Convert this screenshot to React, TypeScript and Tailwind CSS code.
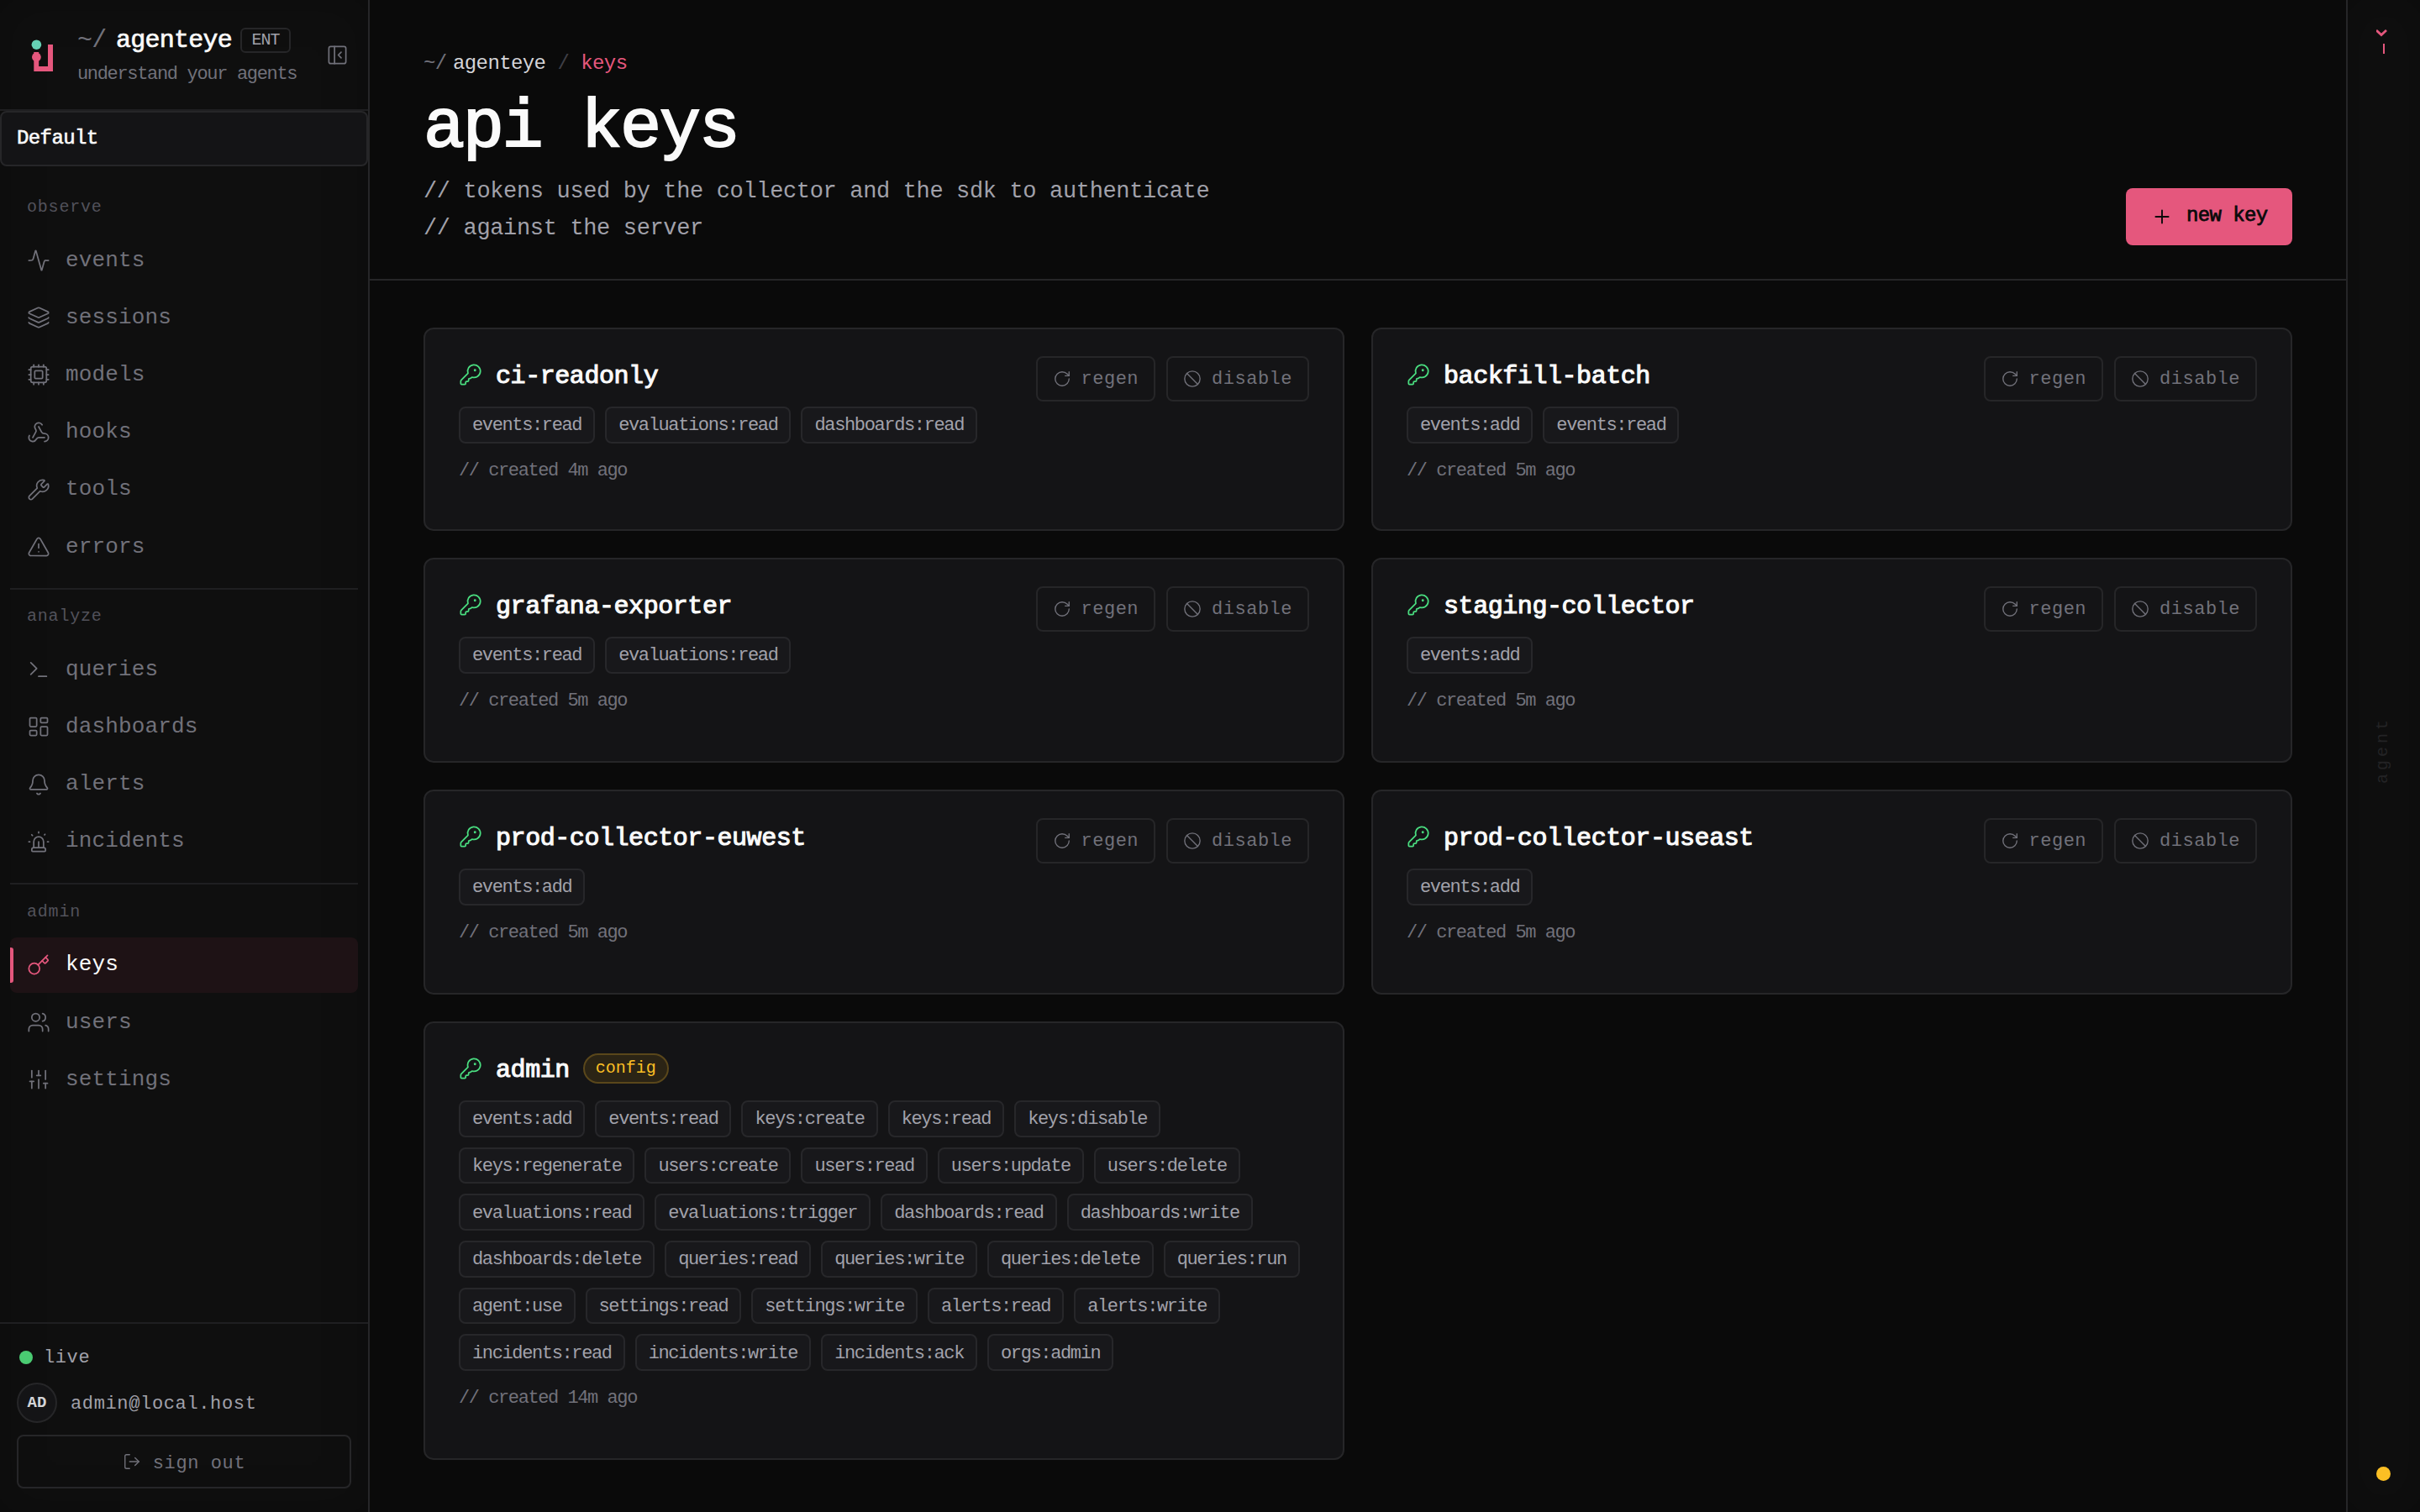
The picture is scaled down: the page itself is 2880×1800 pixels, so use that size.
import type { ReactNode } from "react";
import {
  Activity,
  Ban,
  Bell,
  Cpu,
  KeyRound,
  Key,
  Layers,
  LayoutDashboard,
  LogOut,
  PanelLeftClose,
  Plus,
  RotateCw,
  Siren,
  SlidersVertical,
  Terminal,
  TriangleAlert,
  Users,
  Webhook,
  Wrench,
  type LucideIcon,
} from "lucide-react";

type NavEntry = { label: string; icon: LucideIcon; active?: boolean };

const OBSERVE: NavEntry[] = [
  { label: "events", icon: Activity },
  { label: "sessions", icon: Layers },
  { label: "models", icon: Cpu },
  { label: "hooks", icon: Webhook },
  { label: "tools", icon: Wrench },
  { label: "errors", icon: TriangleAlert },
];

const ANALYZE: NavEntry[] = [
  { label: "queries", icon: Terminal },
  { label: "dashboards", icon: LayoutDashboard },
  { label: "alerts", icon: Bell },
  { label: "incidents", icon: Siren },
];

const ADMIN: NavEntry[] = [
  { label: "keys", icon: Key, active: true },
  { label: "users", icon: Users },
  { label: "settings", icon: SlidersVertical },
];

type ApiKey = { name: string; scopes: string[]; created: string; config?: boolean };

const KEYS: ApiKey[] = [
  {
    name: "ci-readonly",
    scopes: ["events:read", "evaluations:read", "dashboards:read"],
    created: "4m ago",
  },
  { name: "backfill-batch", scopes: ["events:add", "events:read"], created: "5m ago" },
  { name: "grafana-exporter", scopes: ["events:read", "evaluations:read"], created: "5m ago" },
  { name: "staging-collector", scopes: ["events:add"], created: "5m ago" },
  { name: "prod-collector-euwest", scopes: ["events:add"], created: "5m ago" },
  { name: "prod-collector-useast", scopes: ["events:add"], created: "5m ago" },
  {
    name: "admin",
    config: true,
    scopes: [
      "events:add",
      "events:read",
      "keys:create",
      "keys:read",
      "keys:disable",
      "keys:regenerate",
      "users:create",
      "users:read",
      "users:update",
      "users:delete",
      "evaluations:read",
      "evaluations:trigger",
      "dashboards:read",
      "dashboards:write",
      "dashboards:delete",
      "queries:read",
      "queries:write",
      "queries:delete",
      "queries:run",
      "agent:use",
      "settings:read",
      "settings:write",
      "alerts:read",
      "alerts:write",
      "incidents:read",
      "incidents:write",
      "incidents:ack",
      "orgs:admin",
    ],
    created: "14m ago",
  },
];

function Logo() {
  return (
    <svg width="28" height="40" viewBox="0 0 28 40" className="shrink-0">
      <circle cx="7.4" cy="7.2" r="5.8" fill="#66d1b5" />
      <circle cx="7.4" cy="22" r="5.4" fill="#e5577d" />
      <path d="M4.3 16h5.9v17h10.8V7H27v32H4.3z" fill="#e5577d" />
    </svg>
  );
}

function NavItem({ label, icon: Icon, active }: NavEntry) {
  return (
    <div
      className={`relative flex h-[66.2px] items-center gap-[18px] rounded-lg pl-5 text-[26px] tracking-[0.15px] ${
        active ? "bg-[#1e1215] text-[#fafafa]" : "text-[#71717a]"
      }`}
    >
      {active ? (
        <span className="absolute top-3 left-0 h-[42px] w-1 rounded-r-[3px] bg-[#e5577d]" />
      ) : null}
      <Icon size={28} strokeWidth={1.5} className={active ? "text-[#e5577d]" : ""} />
      <span>{label}</span>
    </div>
  );
}

function NavSection({
  title,
  items,
  className = "",
}: {
  title: string;
  items: NavEntry[];
  className?: string;
}) {
  return (
    <div className={className}>
      <div className="mb-3.5 h-8 pl-5 text-xl leading-8 tracking-[0.8px] text-[#52525b]">
        {title}
      </div>
      <div className="flex flex-col gap-0.5">
        {items.map((item) => (
          <NavItem key={item.label} {...item} />
        ))}
      </div>
    </div>
  );
}

function Sidebar() {
  return (
    <aside className="flex w-[440px] shrink-0 flex-col border-r-2 border-[#262628] bg-[#0f0f0f] shadow-[inset_0_0_56px_rgba(0,0,0,0.22)]">
      <div className="flex h-[132px] shrink-0 items-start border-b-2 border-[#1f1f21] pl-9">
        <div className="mt-[46px]">
          <Logo />
        </div>
        <div className="mt-[30px] ml-7 w-[298px]">
          <div className="flex h-9 items-center text-[30px] tracking-[-0.75px]">
            <span className="w-[46px] text-[#71717a]">~/</span>
            <span className="text-[#fafafa] [-webkit-text-stroke:0.7px]">agenteye</span>
            <span className="ml-[10px] flex h-[30px] w-[60px] items-center justify-center rounded-md border-2 border-[#262628] text-[20px] tracking-[-0.9px] text-[#a1a1aa]">
              ENT
            </span>
          </div>
          <div className="mt-[9px] text-[22px] leading-7 tracking-[-1.33px] text-[#71717a]">
            understand your agents
          </div>
        </div>
        <PanelLeftClose
          size={27}
          strokeWidth={1.5}
          className="mt-[52px] -ml-[2px] shrink-0 text-[#71717a]"
        />
      </div>

      <div className="flex h-[66px] shrink-0 items-center rounded-lg border-2 border-[#262628] bg-[#141416] pl-[18px] text-2xl tracking-[-0.6px] text-[#fafafa] [-webkit-text-stroke:0.6px]">
        Default
      </div>

      <nav className="flex-1 px-3">
        <NavSection title="observe" items={OBSERVE} className="pt-[33px]" />
        <NavSection
          title="analyze"
          items={ANALYZE}
          className="mt-4 border-t-2 border-[#1f1f21] pt-4"
        />
        <NavSection
          title="admin"
          items={ADMIN}
          className="mt-4 border-t-2 border-[#1f1f21] pt-[17px]"
        />
      </nav>

      <div className="h-[226px] shrink-0 border-t-2 border-[#1f1f21] pt-[24px] pr-5 pl-5 text-[22px]">
        <div className="flex h-8 items-center pl-[3px] text-[#a1a1aa]">
          <span className="mr-[13px] size-4 rounded-full bg-[#4acb72]" />
          <span className="tracking-[0.6px]">live</span>
        </div>
        <div className="mt-3.5 flex h-12 items-center gap-4">
          <span className="flex size-12 items-center justify-center rounded-full border-2 border-[#262628] bg-[#141416] text-[19px] font-bold text-[#d4d4d8]">
            AD
          </span>
          <span className="pt-0.5 tracking-[0.64px] text-[#a1a1aa]">admin@local.host</span>
        </div>
        <div className="mt-3.5 flex h-16 items-center justify-center gap-3.5 rounded-lg border-2 border-[#262628] text-[#71717a]">
          <LogOut size={22} strokeWidth={1.5} />
          <span className="pt-1 tracking-[0.6px]">sign out</span>
        </div>
      </div>
    </aside>
  );
}

function OutlineButton({ icon: Icon, children }: { icon: LucideIcon; children: ReactNode }) {
  return (
    <div className="flex h-[54px] items-center gap-3 rounded-lg border-2 border-[#262628] px-[18px] text-[22px] tracking-[0.5px] text-[#71717a]">
      <Icon size={22} strokeWidth={1.5} />
      <span className="pt-px">{children}</span>
    </div>
  );
}

function KeyCard({ name, scopes, created, config }: ApiKey) {
  return (
    <div className="flex items-start rounded-xl border-2 border-[#262628] bg-[#141416] px-10 pt-8">
      <div className="min-w-0 flex-1">
        <div className="flex h-11 items-center">
          <KeyRound size={28} strokeWidth={1.5} className="text-[#4ade80]" />
          <span className="ml-4 pt-1 text-[30px] leading-9 tracking-[-0.44px] text-[#fafafa] [-webkit-text-stroke:1.1px]">
            {name}
          </span>
          {config ? (
            <span className="ml-4 flex h-9 items-center rounded-full border-2 border-[#5a471b] bg-[#2b2415] px-[13px] text-[20px] text-[#fbbf24]">
              config
            </span>
          ) : null}
        </div>
        <div className="mt-4 flex flex-wrap gap-3">
          {scopes.map((s) => (
            <span
              key={s}
              className="flex h-[43.7px] items-center rounded-lg border-2 border-[#27272a] bg-[#18181b] px-3.5 pt-0.5 text-[22px] tracking-[-1.37px] text-[#a1a1aa]"
            >
              {s}
            </span>
          ))}
        </div>
        <div className="mt-[17px] text-[22px] leading-8 tracking-[-1.43px] text-[#71717a]">
          // created {created}
        </div>
      </div>
      {config ? null : (
        <div className="flex shrink-0 gap-[13px]">
          <OutlineButton icon={RotateCw}>regen</OutlineButton>
          <OutlineButton icon={Ban}>disable</OutlineButton>
        </div>
      )}
    </div>
  );
}

function PageHeader() {
  return (
    <header className="flex h-[334px] shrink-0 items-start justify-between border-b-2 border-[#262628] px-16">
      <div className="pt-[61px]">
        <div className="flex h-[30px] items-center text-2xl tracking-[-0.6px]">
          <span className="w-[35px] text-[#71717a]">~/</span>
          <span className="text-[#d4d4d8]">agenteye</span>
          <span className="mx-3.5 text-[#3f3f46]">/</span>
          <span className="text-[#e5577d]">keys</span>
        </div>
        <h1 className="mt-[18px] text-[82px] leading-[88px] tracking-[-2.4px] text-[#fafafa] [-webkit-text-stroke:2px]">
          api keys
        </h1>
        <p className="mt-[9px] text-[27px] leading-[44px] tracking-[-0.35px] text-[#a1a1aa]">
          // tokens used by the collector and the sdk to authenticate
          <br />
          // against the server
        </p>
      </div>
      <div className="mt-56 flex h-[68px] w-[198px] items-center gap-4 rounded-lg bg-[#e5577d] pl-[30px] text-2xl tracking-[-0.6px] text-[#0a0a0a] [-webkit-text-stroke:0.8px]">
        <Plus size={26} strokeWidth={1.75} className="shrink-0" />
        <span className="pb-0.5 whitespace-nowrap">new key</span>
      </div>
    </header>
  );
}

function AgentRail() {
  return (
    <aside className="flex w-[88px] shrink-0 flex-col items-center border-l-2 border-[#262628] bg-[#0f0f0f] pt-[34px] pr-0.5 pb-[37px] shadow-[inset_0_0_56px_rgba(0,0,0,0.22)]">
      <svg width="16" height="32" viewBox="0 0 16 32" fill="none" stroke="#e5577d">
        <path d="M0 2 6 7.5 12 2" strokeWidth="2.8" />
        <path d="M9 18v12" strokeWidth="2" />
      </svg>
      <div className="flex flex-1 items-center pb-[25px]">
        <span className="rotate-180 text-xl leading-6 tracking-[4px] text-[#232325] [writing-mode:vertical-rl]">
          agent
        </span>
      </div>
      <span className="size-[17px] rounded-full bg-[#fbbf24]" />
    </aside>
  );
}

export default function App() {
  return (
    <div className="flex h-[1800px] w-[2880px] overflow-hidden bg-[#0a0a0a] font-['Liberation_Mono',monospace]">
      <Sidebar />
      <main className="flex min-w-0 flex-1 flex-col">
        <PageHeader />
        <div className="grid grid-cols-2 grid-rows-[242px_244px_244px_522px] gap-8 px-16 pt-14">
          {KEYS.map((k) => (
            <KeyCard key={k.name} {...k} />
          ))}
        </div>
      </main>
      <AgentRail />
    </div>
  );
}
